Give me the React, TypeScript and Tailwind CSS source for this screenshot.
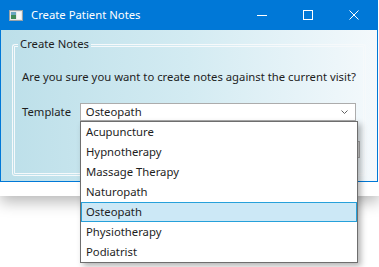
import React from "react";

const items = [
  "Acupuncture",
  "Hypnotherapy",
  "Massage Therapy",
  "Naturopath",
  "Osteopath",
  "Physiotherapy",
  "Podiatrist",
];

export default function App() {
  return (
    <div
      className="relative w-[379px] h-[267px] bg-white overflow-hidden text-[11.3px] text-[#1e1e1e]"
      style={{ fontFamily: '"Noto Sans", "Open Sans", sans-serif' }}
    >
      {/* window shadow */}
      <div className="absolute left-0 top-[10px] w-[379px] h-[186px] shadow-[0_6px_14px_rgba(0,0,0,0.28)]" />
      <div className="relative flex flex-col w-[378px] h-[182px] border-x border-b border-[#0078d7] bg-[#0078d7]">
        {/* title bar */}
        <div className="flex items-center h-[30px] text-white">
          <svg width="14" height="11" viewBox="0 0 14 11" className="ml-[8px] mr-[8px]">
            <rect x="0" y="0" width="14" height="11" fill="#e8e8e8" />
            <rect x="0.5" y="0.5" width="13" height="10" fill="none" stroke="#9aa3a8" />
            <rect x="2" y="2" width="5" height="7" fill="#3f8a57" />
            <rect x="2" y="2" width="5" height="3" fill="#6aa7c0" />
            <rect x="8" y="2" width="4" height="7" fill="#f7f7f7" />
          </svg>
          <span className="leading-none">Create Patient Notes</span>
          <div className="ml-auto flex items-center h-full">
            <div className="w-[46px] h-full flex items-center justify-center">
              <div className="w-[10px] h-px bg-white" />
            </div>
            <div className="w-[46px] h-full flex items-center justify-center">
              <div className="w-[10px] h-[10px] border border-white" />
            </div>
            <div className="w-[46px] h-full flex items-center justify-center">
              <svg width="10" height="10" viewBox="0 0 10 10">
                <path d="M0.5 0.5 L9.5 9.5 M9.5 0.5 L0.5 9.5" stroke="white" strokeWidth="1" />
              </svg>
            </div>
          </div>
        </div>
        {/* client area */}
        <div className="flex-1 flex flex-col px-[11px] pt-[6px] pb-[5px] bg-gradient-to-r from-[#bcdfe9] via-[#d3ebf2] to-[#f4f9fc]">
          <div className="flex-1 flex flex-col">
            <div className="flex h-[16px]">
              <div className="w-[6px] mt-[8px] border-l-[3px] border-t-[3px] border-double border-[#f6f9fb] rounded-tl-[3px]" />
              <span className="px-[2px] leading-[16px]">Create Notes</span>
              <div className="flex-1 mt-[8px] border-r-[3px] border-t-[3px] border-double border-[#f6f9fb] rounded-tr-[3px]" />
            </div>
            <div className="flex-1 flex flex-col border-x-[3px] border-b-[3px] border-double border-[#f6f9fb] rounded-b-[3px] pl-[7px] pr-[7px]">
              <div className="mt-[17px] leading-[16px] whitespace-nowrap">
                Are you sure you want to create notes against the current visit?
              </div>
              <div className="mt-[18px] flex items-center">
                <span className="w-[58px] leading-[16px]">Template</span>
                <div className="flex items-center w-[277px] h-[18px] bg-white border border-[#acacac] pl-[5px] pr-[7px]">
                  <span className="leading-none">Osteopath</span>
                  <svg width="7" height="4" viewBox="0 0 7 4" className="ml-auto">
                    <path d="M0.5 0.5 L3.5 3.5 L6.5 0.5" stroke="#606060" fill="none" strokeWidth="1" />
                  </svg>
                </div>
              </div>
              <div className="mt-[20px] ml-auto mr-[-4px] w-[6px] h-[17px] bg-[#dddddd] border border-[#adadad]" />
            </div>
          </div>
        </div>
      </div>
      {/* dropdown list */}
      <div className="absolute left-[80px] top-[121px] w-[278px] h-[142px] bg-white border border-[#6e6e6e] shadow-[3px_3px_6px_rgba(0,0,0,0.3)] flex flex-col">
        {items.map((it) => (
          <div
            key={it}
            className={
              it === "Osteopath"
                ? "h-[20px] flex items-center pl-[4px] bg-[#cce8f6] border border-[#26a0da]"
                : "h-[20px] flex items-center pl-[5px]"
            }
          >
            <span className="leading-none">{it}</span>
          </div>
        ))}
      </div>
    </div>
  );
}
